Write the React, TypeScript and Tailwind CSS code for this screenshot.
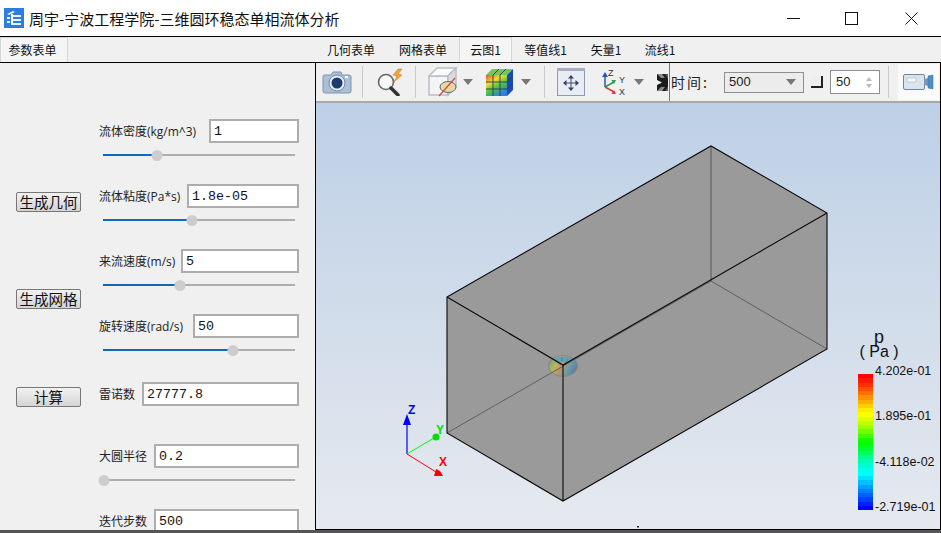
const CJK = "font-['Noto_Sans_CJK_SC','Liberation_Sans',sans-serif]";

const fields = [
    { label: '流体密度(kg/m^3)', value: '1', labelW: 'w-[110px]', handle: 54, top: 'mt-[56px]' },
    { label: '流体粘度(Pa*s)', value: '1.8e-05', labelW: 'w-[88px]', handle: 89, top: 'mt-[28px]' },
    { label: '来流速度(m/s)', value: '5', labelW: 'w-[82px]', handle: 77, top: 'mt-[28px]' },
    { label: '旋转速度(rad/s)', value: '50', labelW: 'w-[94px]', handle: 130, top: 'mt-[28px]' },
    { label: '雷诺数', value: '27777.8', labelW: 'w-[43px]', top: 'mt-[31px]' },
    { label: '大圆半径', value: '0.2', labelW: 'w-[55px]', handle: 1, top: 'mt-[38px]' },
    { label: '迭代步数', value: '500', labelW: 'w-[55px]', top: 'mt-[28px]' },
];

const tabs = [
    { label: '几何表单', w: 'w-[72px]' },
    { label: '网格表单', w: 'w-[72px]' },
    { label: '云图1', w: 'w-[53px]', active: true },
    { label: '等值线1', w: 'w-[67px]' },
    { label: '矢量1', w: 'w-[54px]' },
    { label: '流线1', w: 'w-[54px]' },
];

const colorBands = [
    '#ff0000', '#ff1800', '#ff3000', '#ff5000', '#ff7000', '#ff9000', '#ffb000', '#ffd000', '#ffee00', '#ffff00',
    '#e0ff00', '#c0ff00', '#a0ff00', '#70ff00', '#40ff00', '#10ff00', '#00ff00', '#00ff30', '#00ff60', '#00ff90',
    '#00ffb0', '#00ffd0', '#00fff0', '#00ffff', '#00e0ff', '#00c0ff', '#00a0ff', '#0080ff', '#0060ff', '#0040ff',
    '#0020ff', '#0000ff',
];

function Slider({ handle }: { handle: number }) {
    return (
        <div className="relative mt-[11px] ml-[4px] h-[2px] w-[192px] bg-[#adadad]">
            <div className="h-full bg-[#0f68b8]" style={{ width: handle }} />
            <div
                className="absolute top-[-4px] h-[11px] w-[11px] -translate-x-1/2 rounded-full bg-[#cdcdcd]"
                style={{ left: handle }}
            />
        </div>
    );
}

function Field({ label, value, labelW, handle, top }: (typeof fields)[number]) {
    return (
        <div className={top}>
            <div className="flex h-[24px] items-center">
                <span className={`${labelW} shrink-0 whitespace-nowrap pt-px font-['Open_Sans','Noto_Sans_CJK_SC',sans-serif] text-[12px] text-[#222]`}>{label}</span>
                <div className="flex h-[24px] flex-1 items-center border-2 border-[#adadad] bg-white pt-[2px] pl-[3px] font-['Liberation_Mono',monospace] text-[13.33px] leading-none text-[#111]">
                    {value}
                </div>
            </div>
            {handle !== undefined && <Slider handle={handle} />}
        </div>
    );
}

function ActionButton({ label, top }: { label: string; top: string }) {
    return (
        <button className={`${top} flex h-[20px] w-[65px] items-center justify-center rounded-[2px] border border-[#777] bg-gradient-to-b from-[#f2f2f2] to-[#d4d4d4] text-[14.5px] leading-none text-[#111]`}>
            {label}
        </button>
    );
}

function Sep() {
    return <div className="h-[32px] w-px shrink-0 bg-[#c8c8c8]" />;
}

function Caret({ className }: { className: string }) {
    return <div className={`h-0 w-0 shrink-0 border-x-[5px] border-t-[6px] border-x-transparent border-t-[#777] ${className}`} />;
}

function CameraIcon() {
    return (
        <svg width="30" height="24" viewBox="0 0 30 24" className="ml-[6px] shrink-0">
            <path d="M2 5h7l2-3h8l1 3h7a2 2 0 0 1 2 2v14a2 2 0 0 1-2 2H3a2 2 0 0 1-2-2V7a2 2 0 0 1 1-2z" fill="#a9c0d8" stroke="#7e93aa" />
            <circle cx="15" cy="13" r="8" fill="#e6eef6" stroke="#6f88a4" />
            <circle cx="15" cy="13" r="5.5" fill="#1f3a70" />
            <rect x="23" y="6" width="3" height="2" fill="#fff" />
        </svg>
    );
}

function SearchBoltIcon() {
    return (
        <svg width="30" height="28" viewBox="0 0 30 28" className="ml-[12px] shrink-0">
            <circle cx="11" cy="14" r="7.5" fill="#f7f7f7" stroke="#666" strokeWidth="1.6" />
            <path d="M16 20l7 7" stroke="#333" strokeWidth="3.5" strokeLinecap="round" />
            <path d="M23 1l-5 6 4 1-3 6 8-7-4-1 4-5z" fill="#f2a33a" stroke="#c9791c" strokeWidth="0.5" />
        </svg>
    );
}

function ClipCubeIcon() {
    return (
        <svg width="30" height="30" viewBox="0 0 30 30" className="ml-[12px] shrink-0">
            <path d="M1 9h19v19H1z" fill="#f4f4f4" stroke="#b9bec6" strokeWidth="1.5" />
            <path d="M1 9l8-8h19l-8 8z" fill="#fafafa" stroke="#b9bec6" strokeWidth="1.5" />
            <path d="M20 9l8-8v19l-8 8z" fill="#d9dde3" stroke="#b9bec6" strokeWidth="1.5" />
            <ellipse cx="20" cy="20" rx="8" ry="5.5" fill="#e6d8a2" stroke="#667" />
            <path d="M11 29L27 11" stroke="#cf4a35" strokeWidth="1.2" />
        </svg>
    );
}

function ColorCubeIcon() {
    return (
        <svg width="29" height="29" viewBox="0 0 29 29" className="ml-[12px] shrink-0">
            <defs>
                <linearGradient id="cube-face" x1="0" y1="0" x2="0.6" y2="1">
                    <stop offset="0" stopColor="#e8503a" />
                    <stop offset="0.35" stopColor="#eedc3a" />
                    <stop offset="0.65" stopColor="#49c24a" />
                    <stop offset="1" stopColor="#2f7fe0" />
                </linearGradient>
            </defs>
            <path d="M1 7h21v21H1z" fill="url(#cube-face)" />
            <path d="M1 7l6-6h21l-6 6z" fill="#7bc45a" />
            <path d="M22 7l6-6v21l-6 6z" fill="#1a49b8" />
            <path d="M8 7v21M15 7v21M1 14h21M1 21h21M22 14l6-6M22 21l6-6M8 7l6-6M15 7l6-6" stroke="#2c3a4a" strokeWidth="0.9" fill="none" />
        </svg>
    );
}

function FitIcon() {
    return (
        <svg width="28" height="28" viewBox="0 0 28 28" className="ml-[12px] shrink-0">
            <rect x="0.5" y="0.5" width="27" height="27" fill="#e9edf3" stroke="#8f9bb0" />
            <rect x="0" y="0" width="28" height="3" fill="#a4aec0" />
            <path d="M14 9v12M8 15h12" stroke="#3a4f70" strokeWidth="1" />
            <path d="M14 7l-3 3.500h6zM14 23l-3-3.500h6zM6 15l3.500-3v6zM22 15l-3.500-3v6z" fill="#2c4468" />
        </svg>
    );
}

function AxesIcon() {
    return (
        <svg width="25" height="28" viewBox="0 0 25 28" className="ml-[17px] shrink-0">
            <path d="M3 19V8" stroke="#2458b8" strokeWidth="1.5" />
            <path d="M3 4l-3 5h6z" fill="#2458b8" />
            <path d="M3 19l9-5" stroke="#2a9c4a" strokeWidth="1.5" />
            <path d="M14 12l-4.500 0 2.500 4z" fill="#2a9c4a" />
            <path d="M3 19l9 5" stroke="#d83a3a" strokeWidth="1.5" />
            <path d="M14 26l-4.500 0 2.500-4z" fill="#d83a3a" />
            <text x="6" y="8" fontSize="9" fill="#333" fontFamily="Liberation Sans">Z</text>
            <text x="17" y="15" fontSize="9" fill="#333" fontFamily="Liberation Sans">Y</text>
            <text x="17" y="27" fontSize="9" fill="#333" fontFamily="Liberation Sans">X</text>
        </svg>
    );
}

function ClippedIcon() {
    return (
        <svg width="11" height="17" viewBox="0 0 11 17" className="ml-[13px] shrink-0">
            <rect width="11" height="17" fill="#1a1a1a" />
            <path d="M0 0h5l3 4-4 0zM0 17h5l3-4-4 0z" fill="#8a8a8a" />
            <path d="M0 6l5 2.500-5 2.500z" fill="#f4f4f4" />
            <path d="M8 0h3v5zM8 17h3v-5z" fill="#555" />
        </svg>
    );
}

function SpinBox() {
    return (
        <div className="ml-[7px] flex h-[24px] w-[50px] shrink-0 items-center border border-[#8e8e8e] bg-white pl-[5px] font-['Liberation_Sans',sans-serif] text-[13px] text-[#222]">
            <span className="flex-1">50</span>
            <div className="mr-[7px] flex flex-col gap-[3px]">
                <div className="h-0 w-0 border-x-[3px] border-b-[4px] border-x-transparent border-b-[#bbb]" />
                <div className="h-0 w-0 border-x-[3px] border-t-[4px] border-x-transparent border-t-[#bbb]" />
            </div>
        </div>
    );
}

function VideoIcon() {
    return (
        <svg width="31" height="16" viewBox="0 0 31 16">
            <rect x="0.5" y="0.500" width="21" height="15" rx="1.500" fill="#dbe3ec" stroke="#6f86a0" />
            <rect x="4" y="4" width="9" height="4" fill="#f8f8f8" stroke="#9aa8b8" strokeWidth="0.5" />
            <path d="M21 5l4-1v8l-4-1z" fill="#7f9ab8" />
            <path d="M25 2l5-1v14l-5-1z" fill="#4f8fc8" stroke="#386b99" strokeWidth="0.5" />
        </svg>
    );
}

function Toolbar() {
    return (
        <div className="flex h-[40px] shrink-0 items-center overflow-hidden border-b-2 border-[#a9a9a9] bg-[#f0f0f0] text-[#222]">
            <CameraIcon />
            <div className="ml-[10px]"><Sep /></div>
            <SearchBoltIcon />
            <div className="ml-[10px]"><Sep /></div>
            <ClipCubeIcon />
            <Caret className="ml-[5px]" />
            <ColorCubeIcon />
            <Caret className="ml-[7px]" />
            <div className="ml-[13px]"><Sep /></div>
            <FitIcon />
            <AxesIcon />
            <Caret className="ml-[7px]" />
            <ClippedIcon />
            <div className="ml-[1px] h-[39px] w-px shrink-0 bg-[#777]" />
            <span className="ml-[1px] w-[53px] shrink-0 text-[14px] tracking-[2px]">时间:</span>
            <div className="flex h-[21px] w-[80px] shrink-0 items-center justify-between border border-[#8e8e8e] bg-[#ececec] pr-[7px] pl-[4px] font-['Liberation_Sans',sans-serif] text-[13px]">
                <span>500</span>
                <Caret className="" />
            </div>
            <div className="ml-[7px] h-[12px] w-[12px] shrink-0 border-r-2 border-b-2 border-[#222] bg-[#eee]" />
            <SpinBox />
            <div className="ml-[8px]"><Sep /></div>
            <div className="ml-[9px] flex h-[36px] w-[41px] shrink-0 items-center justify-center bg-[#fafafa]">
                <VideoIcon />
            </div>
        </div>
    );
}

function Scene() {
    return (
        <svg viewBox="0 0 624 426" className="absolute inset-0 h-full w-full">
            <defs>
                <linearGradient id="blob" x1="0" y1="0.2" x2="1" y2="0.6">
                    <stop offset="0" stopColor="#6f9a78" />
                    <stop offset="0.3" stopColor="#b9b860" />
                    <stop offset="0.5" stopColor="#c98f6a" />
                    <stop offset="0.7" stopColor="#6fa0a0" />
                    <stop offset="1" stopColor="#5d78a6" />
                </linearGradient>
            </defs>
            {/* box, coordinates are relative to the viewport corner (316,103) */}
            <path d="M131 194L395 43L511 110V246L247 398L131 330Z" fill="#9a9a9a" />
            <ellipse cx="247" cy="263" rx="14.500" ry="10.500" fill="url(#blob)" stroke="#7f8a8a" />
            <path d="M236 257q10-7 22 0q-10 5-22 0z" fill="#5fa3b5" />
            <path d="M239 258l6 4M252 256l-4 6M246 254v4" stroke="#557" strokeWidth="0.5" />
            <path d="M131 330L395 178L511 246" fill="none" stroke="#5f5f5f" strokeWidth="1" />
            <path d="M395 43V178" fill="none" stroke="#555" strokeWidth="1" />
            <path d="M131 194L395 43L511 110V246L247 398L131 330Z M131 194L247 262L511 110 M247 262V398" fill="none" stroke="#0a0a0a" strokeWidth="1.100" />
            {/* orientation axes */}
            <path d="M91 351V320" stroke="#0000ff" strokeWidth="1.200" />
            <path d="M91 311l-4 11h8z" fill="#0000ff" />
            <path d="M91 351L118 335" stroke="#00ff00" strokeWidth="1" />
            <circle cx="120" cy="334" r="3.500" fill="#00e000" />
            <path d="M91 351L120 369" stroke="#ff0000" strokeWidth="1" />
            <path d="M127 373l-9 0 2-7 4 2z" fill="#ff0000" />
            <text x="92" y="311" fontSize="12" fontWeight="700" fill="#0000ff" fontFamily="Liberation Sans">Z</text>
            <text x="120" y="331" fontSize="12" fontWeight="700" fill="#00e000" fontFamily="Liberation Sans">Y</text>
            <text x="123" y="363" fontSize="12" fontWeight="700" fill="#ff0000" fontFamily="Liberation Sans">X</text>
            <rect x="321" y="423" width="2" height="1.500" fill="#222" />
        </svg>
    );
}

function ColorLegend() {
    return (
        <div className="absolute top-[227px] left-[538px] font-['Liberation_Sans',sans-serif] text-[#111]">
            <div className="text-center text-[16px]">
                <div className="w-[50px] text-[18px] leading-[14px]">p</div>
                <div className="w-[50px] leading-[16px]">( Pa )</div>
            </div>
            <div className="mt-[14px] flex">
                <div className="ml-[4px] flex h-[136px] w-[15px] flex-col">
                    {colorBands.map((color) => (
                        <div key={color} className="flex-1" style={{ backgroundColor: color }} />
                    ))}
                </div>
                <div className="ml-[2px] flex h-[150px] -translate-y-[10px] flex-col justify-between text-[12.5px] leading-[14px] whitespace-nowrap">
                    <span>4.202e-01</span>
                    <span>1.895e-01</span>
                    <span>-4.118e-02</span>
                    <span>-2.719e-01</span>
                </div>
            </div>
        </div>
    );
}

export default function App() {
    return (
        <div className={`flex h-[533px] w-[941px] flex-col overflow-hidden bg-[#f0f0f0] ${CJK}`}>
            {/* Title bar */}
            <header className="flex h-[36px] shrink-0 items-center bg-white">
                <svg width="20" height="20" viewBox="0 0 20 20" className="ml-[4px] shrink-0">
                    <rect width="20" height="20" fill="#2b7de0" />
                    <path d="M3 6l6-3 2 1-6 3zM3 9h3v2H3zM3 13h3v2H3zM8 7h9v2H8zM8 11h9v2H8zM8 15h9v2H8z" fill="#e8f2fd" />
                    <path d="M7 6h2v11H7z" fill="#fff" />
                </svg>
                <span className="ml-[5px] text-[15px] leading-none whitespace-nowrap text-[#111]">周宇-宁波工程学院-三维圆环稳态单相流体分析</span>
                <div className="mr-[23px] ml-auto flex items-center text-[#111]">
                    <div className="mr-[45px] h-px w-[13px] bg-[#111]" />
                    <div className="mr-[47px] h-[13px] w-[13px] border border-[#111]" />
                    <svg width="13" height="13" viewBox="0 0 13 13">
                        <path d="M0.500 0.500L12.500 12.500M12.500 0.500L0.500 12.500" stroke="#111" strokeWidth="1" />
                    </svg>
                </div>
            </header>

            {/* Tabs */}
            <div className="flex h-[27px] shrink-0 items-end border-y border-black text-[12px] text-[#111]">
                <div className="flex h-[25px] w-[68px] items-center justify-center border-x border-t border-[#d5d5d5] bg-[#f5f5f5] pr-[3px]">参数表单</div>
                <div className="ml-[247px] flex h-[25px]">
                    {tabs.map((tab) => (
                        <div
                            key={tab.label}
                            className={`${tab.w} flex items-center justify-center ${tab.active ? 'border-x border-t border-[#d5d5d5] bg-[#f5f5f5]' : ''}`}
                        >
                            {tab.label}
                        </div>
                    ))}
                </div>
            </div>

            {/* Body */}
            <div className="flex min-h-0 flex-1">
                <aside className="flex w-[315px] shrink-0 overflow-hidden">
                    <div className="ml-[16px] flex w-[65px] shrink-0 flex-col">
                        <ActionButton label="生成几何" top="mt-[129px]" />
                        <ActionButton label="生成网格" top="mt-[77px]" />
                        <ActionButton label="计算" top="mt-[78px]" />
                    </div>
                    <div className="ml-[18px] w-[200px] shrink-0">
                        {fields.map((field) => (
                            <Field key={field.label} {...field} />
                        ))}
                    </div>
                </aside>
                <main className="flex min-w-0 flex-1 flex-col border-x border-b border-black">
                    <Toolbar />
                    <div className="relative min-h-0 flex-1 bg-gradient-to-b from-[#bdd0e6] to-[#e6e9ef]">
                        <Scene />
                        <ColorLegend />
                    </div>
                </main>
            </div>
            <div className="h-[3px] shrink-0 bg-[#555]" />
        </div>
    );
}
